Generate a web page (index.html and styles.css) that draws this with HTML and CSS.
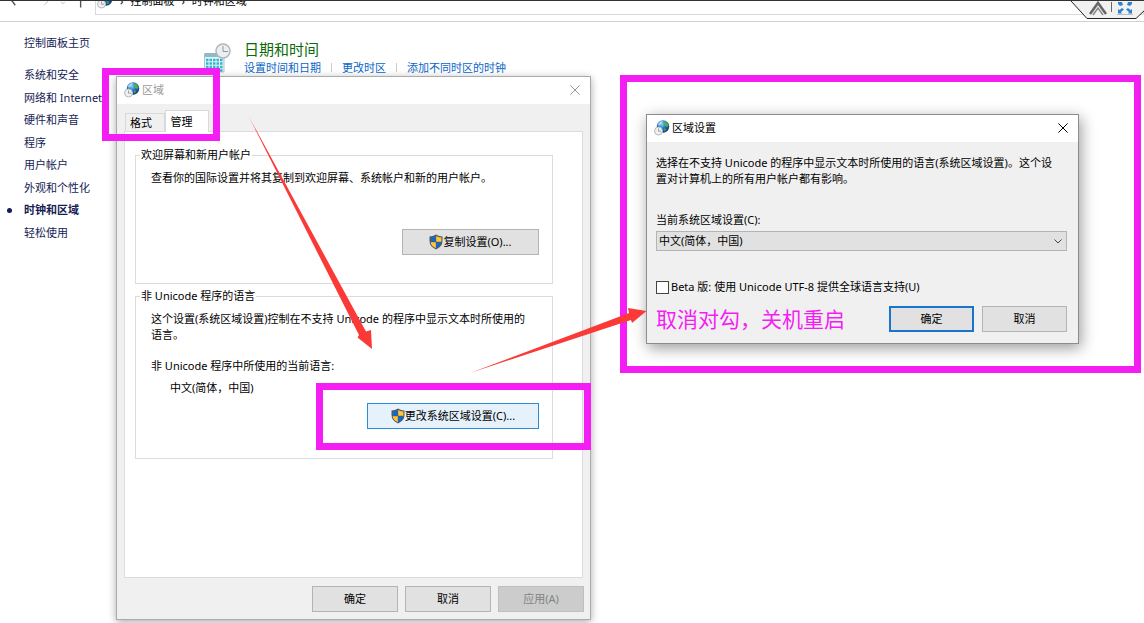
FILE: index.html
```html
<!DOCTYPE html>
<html lang="zh-CN">
<head>
<meta charset="utf-8">
<title>时钟和区域</title>
<link rel="stylesheet" href="styles.css">
</head>
<body>
<svg class="defs" aria-hidden="true">
  <defs>
    <radialGradient id="ocean" cx="40%" cy="30%" r="75%">
      <stop offset="0" stop-color="#8ad4f5"/><stop offset=".5" stop-color="#1e6fc4"/><stop offset="1" stop-color="#0c2c78"/>
    </radialGradient>
    <symbol id="globe" viewBox="0 0 16 16">
      <circle cx="9" cy="6.500" r="6.200" fill="url(#ocean)"/>
      <path d="M4 4Q6 1.200 9 1L8 3 6 4.500 5 6Z" fill="#b4dce8"/>
      <path d="M10 1l3 1.500 1.500 3-1 1.500-2-1-2-2z" fill="#4fb04a"/>
      <path d="M10 8l2.500 1-1.500 2.500-1.500-1z" fill="#3c9a52"/>
      <circle cx="4.500" cy="11" r="4" fill="#eef1f3" stroke="#b5babf"/>
      <path d="M4.500 8.500V11.200H7" fill="none" stroke="#999" stroke-width=".9"/>
    </symbol>
    <symbol id="shield" viewBox="0 0 14 16">
      <path d="M7 .5Q10 2.500 13.500 2.500V7Q13.500 12.500 7 15.500Q.5 12.500 .5 7V2.500Q4 2.500 7 .5Z" fill="#595959"/>
      <path d="M6.800 2Q4 3.500 1.600 3.500V7.800H6.800Z" fill="#1767c9"/>
      <path d="M7.200 2Q10 3.500 12.400 3.500V7.800H7.200Z" fill="#ffc83a"/>
      <path d="M1.600 8.200H6.800V14.200Q2.200 12 1.600 8.200Z" fill="#ffc83a"/>
      <path d="M12.400 8.200H7.200V14.200Q11.800 12 12.400 8.200Z" fill="#1767c9"/>
    </symbol>
    <symbol id="close" viewBox="0 0 10 10">
      <path d="M.4 .4L9.600 9.600M9.600 .4L.4 9.600" fill="none" stroke="currentColor"/>
    </symbol>
  </defs>
</svg>

<header class="toolbar">
  <svg class="nav-arrows" viewBox="0 0 95 15" aria-hidden="true">
    <path d="M8 -2L13 4.500" stroke="#555" stroke-width="1.500"/>
    <path d="M49 -1L44 4.500" stroke="#bbb"/>
    <path d="M62 1L64 3L66 1" stroke="#bbb" fill="none"/>
    <path d="M83 0V7" stroke="#555" stroke-width="1.500"/>
  </svg>
  <div class="address">
    <svg class="icon16" aria-hidden="true"><use href="#globe"/></svg>
    <span>›</span><span>控制面板</span><span>›</span><span>时钟和区域</span>
  </div>
</header>

<div class="page">
  <nav class="side">
    <a class="home" href="#">控制面板主页</a>
    <ul>
      <li><a href="#">系统和安全</a></li>
      <li><a href="#">网络和 Internet</a></li>
      <li><a href="#">硬件和声音</a></li>
      <li><a href="#">程序</a></li>
      <li><a href="#">用户帐户</a></li>
      <li><a href="#">外观和个性化</a></li>
      <li class="current"><a href="#">时钟和区域</a></li>
      <li><a href="#">轻松使用</a></li>
    </ul>
  </nav>
  <main class="category">
    <svg class="calendar" viewBox="0 0 28 30" aria-hidden="true">
      <path d="M.5 11H20V29H.5Z" fill="#dff4f8" stroke="#b5c4ca"/>
      <path d="M.5 10H20V14H.5Z" fill="#91b9c6"/>
      <path d="M2 17H19M2 20.500H19M2 24H19M2 27.500H19" stroke="#37b6cc" stroke-width="2.500" stroke-dasharray="2.500 1"/>
      <circle cx="19" cy="8" r="7" fill="#eceff0" stroke="#b0b6ba" stroke-width="1.500"/>
      <path d="M19 3V8.500H24" fill="none" stroke="#8b979d"/>
    </svg>
    <div>
      <h1><a href="#">日期和时间</a></h1>
      <div class="tasks">
        <a href="#">设置时间和日期</a><a href="#">更改时区</a><a href="#">添加不同时区的时钟</a>
      </div>
    </div>
  </main>
</div>

<svg class="corner" viewBox="0 0 76 20" aria-hidden="true">
  <path d="M1 1L17 18.500H66L76 9V1Z" fill="#f1f1f1"/>
  <path d="M1 1L17 18.500H66L76 9" fill="none" stroke="#222"/>
  <path d="M20 14L28 3L36 14" fill="none" stroke="#666" stroke-width="2.500"/>
  <path d="M23 15L28 8L33 15" fill="none" stroke="#888" stroke-width="1.500"/>
  <path d="M41.500 2V12" stroke="#666"/>
  <path d="M47 14.500H63" stroke="#bbb"/>
  <g fill="#2f82d0"><path d="M48 2H52L53 5 50 6 48 4ZM62 2H58L57 5 60 6 62 4Z"/><path d="M48 13.500V9L49.500 10 52 8 54 9.500 51 12 52 13.500ZM62 13.500V9L60.500 10 58 8 56 9.500 59 12 58 13.500Z"/></g>
</svg>

<section class="window region" aria-label="区域">
  <div class="titlebar">
    <svg class="icon16" aria-hidden="true"><use href="#globe"/></svg>
    <h2>区域</h2>
    <button class="close" aria-label="关闭"><svg aria-hidden="true"><use href="#close"/></svg></button>
  </div>
  <div class="region-body">
    <div class="tabs" role="tablist">
      <button class="tab" role="tab" aria-selected="false">格式</button>
      <button class="tab active" role="tab" aria-selected="true">管理</button>
    </div>
    <div class="panel" role="tabpanel">
      <fieldset class="group welcome">
        <legend>欢迎屏幕和新用户帐户</legend>
        <p>查看你的国际设置并将其复制到欢迎屏幕、系统帐户和新的用户帐户。</p>
        <button class="btn copy"><svg class="shield" aria-hidden="true"><use href="#shield"/></svg>复制设置(O)...</button>
      </fieldset>
      <fieldset class="group locale">
        <legend>非 Unicode 程序的语言</legend>
        <p>这个设置(系统区域设置)控制在不支持 Unicode 的程序中显示文本时所使用的<br>语言。</p>
        <p class="now">非 Unicode 程序中所使用的当前语言:</p>
        <p class="value">中文(简体，中国)</p>
        <button class="btn change"><svg class="shield" aria-hidden="true"><use href="#shield"/></svg>更改系统区域设置(C)...</button>
      </fieldset>
    </div>
    <div class="actions">
      <button class="btn">确定</button>
      <button class="btn">取消</button>
      <button class="btn" disabled>应用(A)</button>
    </div>
  </div>
</section>

<section class="window settings" aria-label="区域设置">
  <div class="titlebar">
    <svg class="icon16" aria-hidden="true"><use href="#globe"/></svg>
    <h2>区域设置</h2>
    <button class="close" aria-label="关闭"><svg aria-hidden="true"><use href="#close"/></svg></button>
  </div>
  <div class="settings-body">
    <p>选择在不支持 Unicode 的程序中显示文本时所使用的语言(系统区域设置)。这个设<br>置对计算机上的所有用户帐户都有影响。</p>
    <label class="field-label" for="locale">当前系统区域设置(C):</label>
    <div class="select-wrap">
      <select id="locale"><option>中文(简体，中国)</option></select>
      <svg class="chevron" viewBox="0 0 8 5" aria-hidden="true"><path d="M.5 .5L4 4L7.500 .5" fill="none" stroke="#444"/></svg>
    </div>
    <label class="check"><input type="checkbox">Beta 版: 使用 Unicode UTF-8 提供全球语言支持(U)</label>
    <div class="footer">
      <span class="note">取消对勾，关机重启</span>
      <button class="btn primary">确定</button>
      <button class="btn">取消</button>
    </div>
  </div>
</section>

<svg class="marks" viewBox="0 0 1144 623" aria-hidden="true">
  <g fill="none" stroke="#f41df4" stroke-width="7">
    <path d="M105.500 71.500H216.500V137.500H105.500Z"/>
    <path d="M319.500 386.500H587.500V446.500H319.500Z"/>
    <path d="M623.500 78.500H1137.500V369.500H623.500Z"/>
  </g>
  <g fill="#fb3a37">
    <path d="M248.500 116L366 331.500L371 330L372 349L357.500 337.500L359 335Z"/>
    <path d="M470 373L631 320L632 323L646.500 311L628 308L629 313Z"/>
  </g>
</svg>
</body>
</html>
```
FILE: styles.css
```css
* { box-sizing: border-box; }

body {
  margin: 0;
  min-height: 100vh;
  overflow: hidden;
  background: #fff;
  color: #000;
  font: 11px/16px "Noto Sans", "Noto Sans CJK SC", sans-serif;
}

h1, h2, p, ul, fieldset { margin: 0; padding: 0; }
ul { list-style: none; }
a { color: inherit; text-decoration: none; }
button, select, input { font: inherit; color: inherit; margin: 0; }

.defs { position: absolute; width: 0; height: 0; }
.icon16 { flex: none; width: 16px; height: 16px; }

/* Control panel behind the dialogs */
.toolbar {
  display: flex;
  align-items: flex-end;
  height: 22px;
  padding-bottom: 6px;
  overflow: hidden;
  border-top: 1px solid #333;
  border-bottom: 1px solid #d2d2d2;
}
.nav-arrows { flex: none; width: 95px; height: 14px; }
.address {
  display: flex;
  flex: 1;
  align-items: center;
  gap: 7px;
  height: 28px;
  padding-left: 1px;
  border: 1px solid #d9d9d9;
}

.page { display: flex; }
.side {
  flex: none;
  width: 204px;
  padding: 13px 0 0 24px;
  color: #151c55;
}
.home { display: block; }
.side ul {
  display: flex;
  flex-direction: column;
  justify-content: space-between;
  height: 174px;
  margin-top: 16px;
}
.current { display: flex; align-items: center; margin-left: -17px; font-weight: bold; }
.current::before {
  width: 5px;
  height: 5px;
  margin-right: 12px;
  border-radius: 50%;
  background: #151c55;
  content: "";
}
.category { display: flex; gap: 12px; padding-top: 17px; }
.calendar { width: 28px; height: 30px; margin-top: 4px; }
h1 { color: #0b6b0b; font-size: 15px; font-weight: normal; line-height: 20px; }
.tasks { display: flex; margin-top: 1px; color: #0a66c8; }
.tasks a + a { margin-left: 10px; }
.tasks a + a::before {
  display: inline-block;
  width: 1px;
  height: 9px;
  margin-right: 10px;
  background: #ccc;
  content: "";
}
.corner { position: absolute; top: 0; right: -2px; width: 76px; height: 20px; }

/* Dialog windows */
.window {
  position: absolute;
  border: 1px solid #8c8c8c;
  background: #f0f0f0;
}
.titlebar {
  display: flex;
  align-items: center;
  gap: 2px;
  height: 27px;
  padding: 0 10px 2px 7px;
  background: #fff;
}
h2 { flex: 1; font-size: 11px; font-weight: normal; }
.close { display: flex; padding: 0; border: 0; background: none; }
.close svg { width: 10px; height: 10px; }

.btn {
  display: flex;
  align-items: center;
  justify-content: center;
  width: 86px;
  height: 26px;
  padding: 0;
  border: 1px solid #b4b4b4;
  background: #e1e1e1;
}
.btn:disabled { border-color: #bfbfbf; background: #ccc; color: #838383; }
.btn.primary { border: 2px solid #1973cf; }
.shield { width: 14px; height: 16px; }

.region { top: 76px; left: 116px; width: 475px; border-color: #aaa; box-shadow: 0 2px 8px #0005; }
.region h2, .region .close { color: #999; }
.region-body { padding: 6px 7px 7px; }
.tabs { display: flex; align-items: flex-end; height: 21px; padding-left: 1px; }
.tab {
  width: 40px;
  height: 18px;
  padding: 0;
  padding-right: 8px;
  border: 1px solid #d9d9d9;
  border-bottom: 0;
  background: #f0f0f0;
}
.tab.active {
  z-index: 1;
  width: 44px;
  height: 22px;
  padding-right: 11px;
  margin-bottom: -1px;
  background: #fff;
}
.panel {
  height: 447px;
  padding: 15px 29px 0 10px;
  border: 1px solid #dcdcdc;
  background: #fff;
}
.group { display: flex; flex-direction: column; border: 1px solid #dcdcdc; }
legend { margin-left: 4px; padding: 0 1px; }
.group p { padding-left: 15px; }
.welcome { height: 137px; padding-top: 7px; }
.group .btn { align-self: flex-end; margin-right: 13px; }
.copy { width: 137px; margin-top: 43px; }
.locale { height: 171px; margin-top: 4px; padding-top: 7px; }
.locale .now { margin-top: 15px; }
.locale .value { margin-top: 6px; padding-left: 34px; }
.change { width: 172px; margin-top: 7px; border-color: #2f8ad6; background: #e5f1fb; }
.actions { display: flex; justify-content: flex-end; gap: 7px; margin: 8px -1px 0 0; }

.settings { top: 114px; left: 646px; width: 433px; box-shadow: 2px 4px 14px #0006; }
.settings-body { padding: 13px 11px 11px 9px; }
.field-label { display: block; margin-top: 25px; }
.select-wrap { display: grid; align-items: center; margin-top: 3px; }
.select-wrap > * { grid-area: 1 / 1; }
select {
  appearance: none;
  width: 100%;
  height: 20px;
  padding: 0 2px;
  border: 1px solid #b4b4b4;
  border-radius: 0;
  background: #e1e1e1;
}
.chevron { justify-self: end; width: 8px; height: 5px; margin-right: 5px; pointer-events: none; }
.check { display: flex; align-items: center; gap: 2px; margin-top: 28px; }
.check input {
  appearance: none;
  width: 13px;
  height: 13px;
  border: 1px solid #444;
  background: #fff;
}
.footer { display: flex; align-items: center; gap: 8px; margin-top: 11px; }
.footer .btn { width: 85px; }
.note { flex: 1; color: #f41df4; font-size: 21px; line-height: 26px; }

/* Frames and arrows drawn over everything */
.marks {
  position: absolute;
  top: 0;
  left: 0;
  width: 1144px;
  height: 623px;
  pointer-events: none;
}
```
